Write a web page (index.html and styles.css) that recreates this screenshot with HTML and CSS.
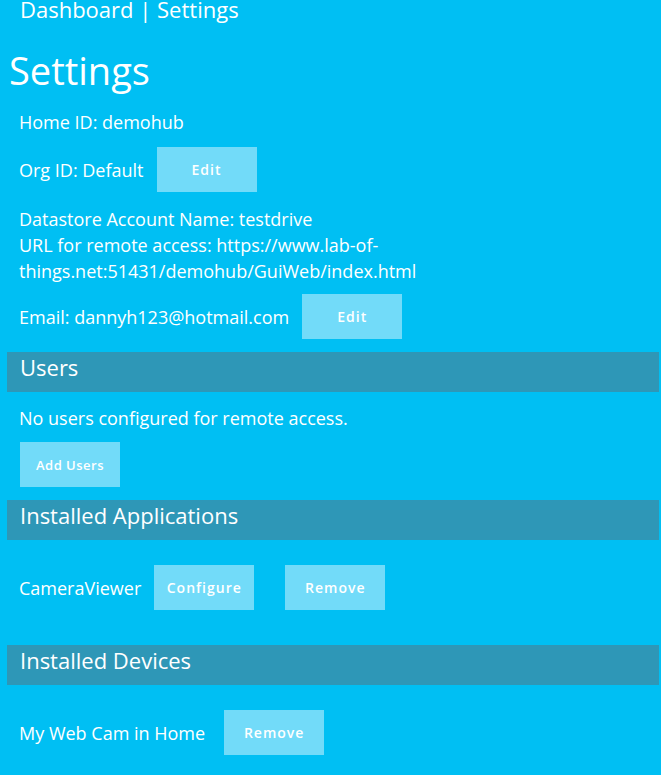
FILE: index.html
```html
<!DOCTYPE html>
<html lang="en">
<head>
<meta charset="utf-8">
<title>Dashboard | Settings</title>
<link rel="stylesheet" href="styles.css">
</head>
<body>
<div class="topnav">Dashboard | Settings</div>
<h1 class="title">Settings</h1>
<div class="content">
  <div class="info">
    <div class="line line-home">Home ID: demohub</div>
    <div class="row row-org">
      <span class="label">Org ID: Default</span>
      <button class="btn">Edit</button>
    </div>
    <div class="para">
      Datastore Account Name: testdrive<br>
      URL for remote access: https://www.lab-of-things.net:51431/demohub/GuiWeb/index.html
    </div>
    <div class="row row-email">
      <span class="label">Email: dannyh123@hotmail.com</span>
      <button class="btn">Edit</button>
    </div>
  </div>

  <div class="section-bar">Users</div>
  <div class="section-body users">
    <div class="line">No users configured for remote access.</div>
    <button class="btn btn-add">Add Users</button>
  </div>

  <div class="section-bar">Installed Applications</div>
  <div class="section-body">
    <div class="row row-app">
      <span class="label">CameraViewer</span>
      <button class="btn">Configure</button>
      <button class="btn btn-far">Remove</button>
    </div>
  </div>

  <div class="section-bar section-devices">Installed Devices</div>
  <div class="section-body">
    <div class="row row-dev">
      <span class="label">My Web Cam in Home</span>
      <button class="btn">Remove</button>
    </div>
  </div>
</div>
</body>
</html>
```

FILE: styles.css
```css
html, body {
  margin: 0;
  padding: 0;
}
body {
  background: #00bff3;
  color: #ffffff;
  font-family: "Open Sans", "Noto Sans", sans-serif;
  width: 661px;
  height: 775px;
  overflow: hidden;
}
.topnav {
  font-size: 22px;
  line-height: 18px;
  padding-left: 20px;
}
.title {
  font-size: 38px;
  font-weight: 400;
  line-height: 44px;
  margin: 30px 0 0 9px;
}
.content {
  padding: 0 2px 0 7px;
}
.info {
  padding-left: 12px;
}
.line {
  font-size: 18px;
  line-height: 26px;
}
.line-home {
  margin-top: 17px;
}
.row {
  display: flex;
  align-items: center;
  font-size: 18px;
  line-height: 26px;
}
.row-org {
  margin-top: 12px;
}
.label {
  margin-right: 13px;
}
.btn {
  width: 100px;
  height: 45px;
  border: none;
  background: #72dbf9;
  color: #ffffff;
  font-family: "Open Sans", "Noto Sans", sans-serif;
  font-weight: 600;
  font-size: 14px;
  letter-spacing: 1px;
  padding: 0;
  margin: 0;
}
.para {
  max-width: 440px;
  font-size: 18px;
  line-height: 26px;
  margin-top: 14px;
}
.row-email {
  margin-top: 10px;
}
.section-bar {
  background: #2e97b7;
  height: 40px;
  line-height: 31px;
  font-size: 22px;
  padding-left: 13px;
  margin-top: 13px;
}
.section-devices {
  margin-top: 35px;
}
.section-body {
  padding-left: 12px;
}
.users .line {
  margin-top: 13px;
}
.btn-add {
  display: block;
  margin: 11px 0 0 1px;
  letter-spacing: 0.5px;
  font-size: 13px;
}
.row-app {
  margin-top: 25px;
}
.btn-far {
  margin-left: 31px;
}
.row-dev {
  margin-top: 25px;
}
.row-dev .label {
  margin-right: 19px;
}
```
